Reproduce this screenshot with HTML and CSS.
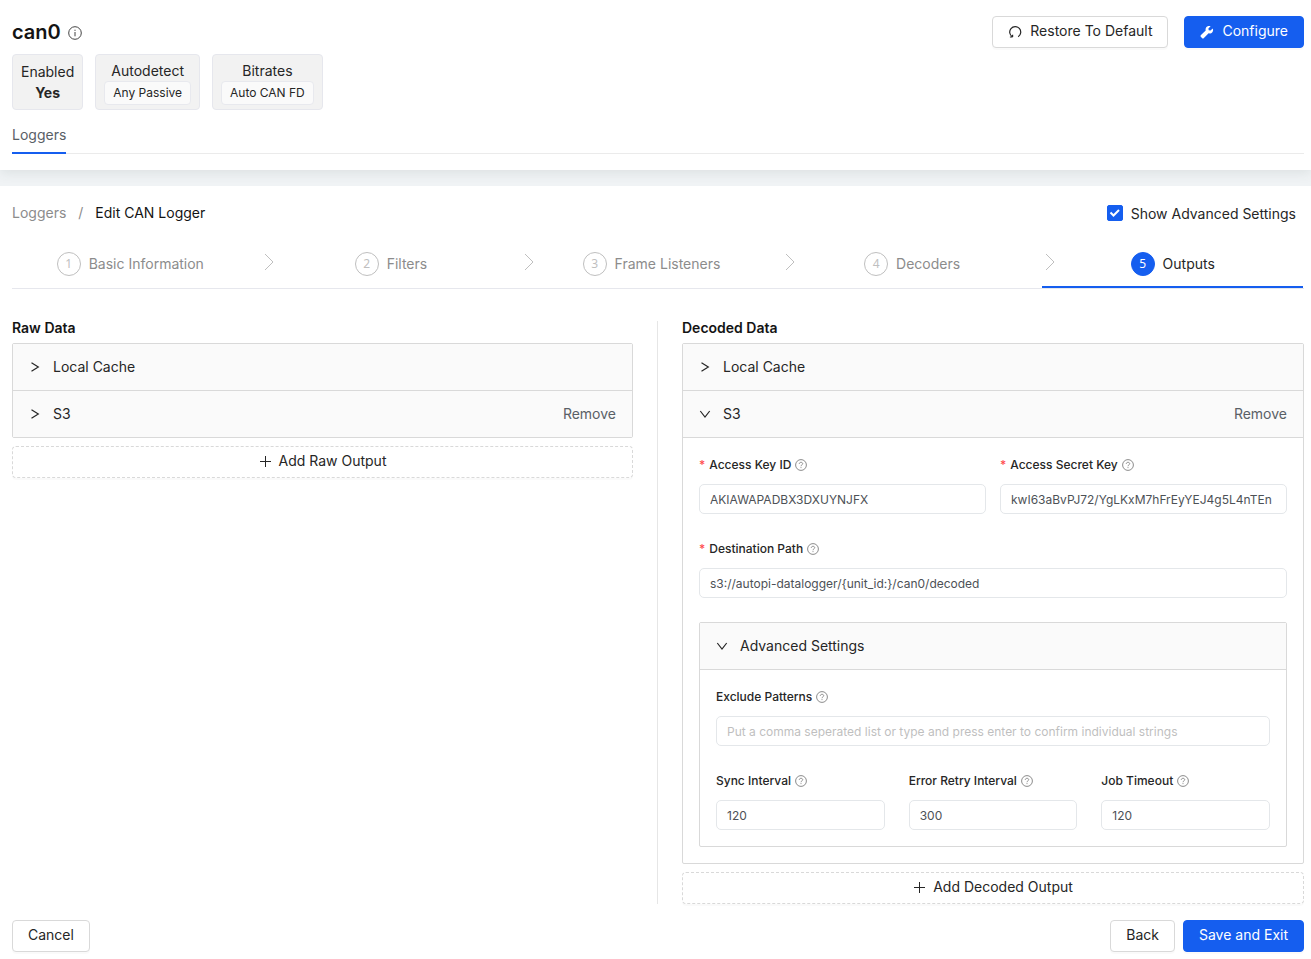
FILE: index.html
```html
<!DOCTYPE html>
<html lang="en">
<head>
<meta charset="utf-8">
<meta name="viewport" content="width=device-width, initial-scale=1">
<title>can0 – Edit CAN Logger</title>
<link rel="stylesheet" href="styles.css">
</head>
<body>
<svg class="sprite" aria-hidden="true">
  <symbol id="i-right" viewBox="0 0 12 12"><path d="M2.5 1.8 9.3 6 2.5 10.2"/></symbol>
  <symbol id="i-down" viewBox="0 0 12 12"><path d="M1.3 3 6 9l4.700-6"/></symbol>
  <symbol id="i-step" viewBox="0 0 12 18"><path d="M2 1l8 8-8 8"/></symbol>
  <symbol id="i-plus" viewBox="0 0 12 12"><path d="M6.500 1v11M1 6.500h11"/></symbol>
  <symbol id="i-help" viewBox="0 0 12 12"><circle cx="6" cy="6" r="5.400"/><path d="M4.300 4.900c0-1 .7-1.600 1.700-1.600s1.700.6 1.700 1.400c0 1.100-1.700 1.200-1.700 2.500M6 8.200v.9"/></symbol>
</svg>

<header class="header">
  <div class="header-top">
    <h1 class="title">can0
      <svg class="info" viewBox="0 0 14 14" aria-hidden="true"><circle cx="7" cy="7" r="6.300"/><path d="M7 6v4.300M7 3.700v1.200"/></svg>
    </h1>
    <div class="actions">
      <button class="btn" type="button">
        <svg class="btn-icon" viewBox="0 0 14 14" aria-hidden="true"><path d="M4.600 12H1.900M4.600 12V9.800M4.400 11.800A5.500 5.500 0 1 1 10.200 11.700" fill="none" stroke="currentColor" stroke-width="1.200"/></svg>
        Restore To Default
      </button>
      <button class="btn btn-primary" type="button">
        <svg class="btn-icon" viewBox="0 0 14 14" aria-hidden="true"><path fill="currentColor" d="M12.700 3.500 10.500 5.500 8.700 5.200 8.400 3.500 10.600 1.200C8.800.6 6.700 1.200 5.900 2.900c-.4.9-.4 1.700-.2 2.500L1 10.100a1.300 1.300 0 0 0 0 1.900l1 1a1.300 1.300 0 0 0 1.900 0L8.600 8.300c1.400.4 3-.1 3.900-1.400.7-1 .8-2.300.2-3.400z"/></svg>
        Configure
      </button>
    </div>
  </div>
  <div class="cards">
    <div class="card"><span>Enabled</span><strong>Yes</strong></div>
    <div class="card"><span>Autodetect</span><span class="tag">Any Passive</span></div>
    <div class="card"><span>Bitrates</span><span class="tag">Auto CAN FD</span></div>
  </div>
  <nav class="tabs"><a class="tab" href="#loggers">Loggers</a></nav>
</header>

<main class="main">
  <div class="toolbar">
    <nav class="breadcrumb" aria-label="Breadcrumb"><a href="#loggers">Loggers</a><span class="slash">/</span><span class="current">Edit CAN Logger</span></nav>
    <label class="check"><input type="checkbox" checked>Show Advanced Settings</label>
  </div>

  <div class="steps-wrap">
    <ol class="steps">
      <li class="step"><button type="button"><span class="num">1</span>Basic Information</button></li>
      <li class="step"><svg class="step-arrow"><use href="#i-step"/></svg><button type="button"><span class="num">2</span>Filters</button></li>
      <li class="step"><svg class="step-arrow"><use href="#i-step"/></svg><button type="button"><span class="num">3</span>Frame Listeners</button></li>
      <li class="step"><svg class="step-arrow"><use href="#i-step"/></svg><button type="button"><span class="num">4</span>Decoders</button></li>
      <li class="step active"><svg class="step-arrow"><use href="#i-step"/></svg><button type="button" aria-current="step"><span class="num">5</span>Outputs</button></li>
    </ol>
  </div>

  <div class="columns">
    <section class="column">
      <h2 class="heading">Raw Data</h2>
      <div class="panel">
        <div class="row"><button class="toggle" type="button" aria-expanded="false"><svg class="chev"><use href="#i-right"/></svg>Local Cache</button></div>
        <div class="row"><button class="toggle" type="button" aria-expanded="false"><svg class="chev"><use href="#i-right"/></svg>S3</button><button class="remove" type="button">Remove</button></div>
      </div>
      <button class="btn btn-dashed" type="button"><svg class="plus"><use href="#i-plus"/></svg>Add Raw Output</button>
    </section>

    <section class="column column-right">
      <h2 class="heading">Decoded Data</h2>
      <div class="panel">
        <div class="row"><button class="toggle" type="button" aria-expanded="false"><svg class="chev"><use href="#i-right"/></svg>Local Cache</button></div>
        <div class="row"><button class="toggle" type="button" aria-expanded="true"><svg class="chev"><use href="#i-down"/></svg>S3</button><button class="remove" type="button">Remove</button></div>
        <div class="panel-body">
          <div class="fields two">
            <div class="field">
              <label for="key"><span class="req">*</span>Access Key ID<svg class="help"><use href="#i-help"/></svg></label>
              <input id="key" type="text" value="AKIAWAPADBX3DXUYNJFX">
            </div>
            <div class="field">
              <label for="secret"><span class="req">*</span>Access Secret Key<svg class="help"><use href="#i-help"/></svg></label>
              <input id="secret" type="text" value="kwI63aBvPJ72/YgLKxM7hFrEyYEJ4g5L4nTEn">
            </div>
          </div>
          <div class="field">
            <label for="path"><span class="req">*</span>Destination Path<svg class="help"><use href="#i-help"/></svg></label>
            <input id="path" type="text" value="s3://autopi-datalogger/{unit_id:}/can0/decoded">
          </div>
          <div class="panel">
            <div class="row"><button class="toggle" type="button" aria-expanded="true"><svg class="chev"><use href="#i-down"/></svg>Advanced Settings</button></div>
            <div class="panel-body">
              <div class="field">
                <label for="exclude">Exclude Patterns<svg class="help"><use href="#i-help"/></svg></label>
                <input id="exclude" type="text" placeholder="Put a comma seperated list or type and press enter to confirm individual strings">
              </div>
              <div class="fields three">
                <div class="field">
                  <label for="sync">Sync Interval<svg class="help"><use href="#i-help"/></svg></label>
                  <input id="sync" type="text" value="120">
                </div>
                <div class="field">
                  <label for="retry">Error Retry Interval<svg class="help"><use href="#i-help"/></svg></label>
                  <input id="retry" type="text" value="300">
                </div>
                <div class="field">
                  <label for="timeout">Job Timeout<svg class="help"><use href="#i-help"/></svg></label>
                  <input id="timeout" type="text" value="120">
                </div>
              </div>
            </div>
          </div>
        </div>
      </div>
      <button class="btn btn-dashed" type="button"><svg class="plus"><use href="#i-plus"/></svg>Add Decoded Output</button>
    </section>
  </div>

  <footer class="footer">
    <button class="btn" type="button">Cancel</button>
    <div class="footer-right">
      <button class="btn" type="button">Back</button>
      <button class="btn btn-primary" type="button">Save and Exit</button>
    </div>
  </footer>
</main>
</body>
</html>
```
FILE: styles.css
```css
:root {
  --blue: #155eef;
  --text: #262626;
  --muted: #8c8c8c;
  --line: #d9d9d9;
}

* { box-sizing: border-box; }

body {
  margin: 0;
  background: #f0f3f5;
  color: var(--text);
  font: 14px/22px Inter, "Liberation Sans", sans-serif;
}

button, input { font: inherit; color: inherit; }
button { cursor: pointer; }
a { text-decoration: none; }
.sprite { position: absolute; width: 0; height: 0; }

.header {
  padding: 16px 7px 16px 12px;
  background: #fff;
  box-shadow: 0 2px 12px rgba(60, 80, 70, 0.12);
}
.header-top { display: flex; justify-content: space-between; align-items: center; }
.title {
  display: flex;
  align-items: center;
  gap: 7px;
  margin: 0;
  font-size: 20px;
  line-height: 32px;
  font-weight: 600;
  color: #141414;
}
.info { width: 14px; height: 14px; margin-top: 2px; fill: none; stroke: #434343; }
.actions { display: flex; gap: 16px; }

.btn {
  display: inline-flex;
  align-items: center;
  justify-content: center;
  gap: 8px;
  height: 32px;
  padding: 0 15px 2px;
  border: 1px solid var(--line);
  border-radius: 4px;
  background: #fff;
  box-shadow: 0 2px 0 rgba(0, 0, 0, 0.02);
}
.btn-icon { width: 14px; height: 14px; margin-top: 2px; }
.btn-primary { border-color: var(--blue); background: var(--blue); color: #fff; }
.btn-dashed { width: 100%; margin-top: 8px; border-style: dashed; }
.plus { width: 12px; height: 12px; fill: none; stroke: currentColor; }

.cards { display: flex; gap: 12px; margin-top: 6px; }
.card {
  display: flex;
  flex-direction: column;
  align-items: center;
  justify-content: center;
  height: 56px;
  padding: 2px 8px 0;
  border: 1px solid #e6e7ed;
  border-radius: 4px;
  background: #f2f2f2;
  line-height: 20px;
}
.card strong { font-weight: 700; line-height: 22px; }
.card .tag {
  padding: 0 8px;
  border: 1px solid #e8e9ee;
  border-radius: 4px;
  background: #fafafa;
  font-size: 12px;
  line-height: 22px;
}

.tabs { display: flex; margin-top: 14px; border-bottom: 1px solid #ebebeb; }
.tab {
  height: 30px;
  margin-bottom: -1px;
  border-bottom: 2px solid var(--blue);
  color: #596066;
}

.main { margin-top: 16px; padding: 16px 7px 7px 12px; background: #fff; }
.toolbar { display: flex; justify-content: space-between; padding-right: 8px; }
.breadcrumb { display: flex; gap: 12px; }
.breadcrumb a, .slash { color: var(--muted); }
.current { color: #141414; }
.check { display: flex; align-items: center; gap: 8px; padding-top: 1px; }
.check input {
  appearance: none;
  width: 16px;
  height: 16px;
  margin: 0 0 2px;
  border: 1px solid var(--line);
  border-radius: 2px;
}
.check input:checked {
  border-color: var(--blue);
  background: var(--blue) url("data:image/svg+xml,%3Csvg xmlns='http://www.w3.org/2000/svg' viewBox='0 0 14 14'%3E%3Cpath d='M2.500 6.500l3 3 5.500-5.500' fill='none' stroke='white' stroke-width='2'/%3E%3C/svg%3E");
}

.steps-wrap { border-bottom: 1px solid #e6e7ed; margin-top: 19px; }
.steps {
  display: grid;
  grid-template-columns: repeat(5, 1fr);
  margin: 0 1px 0 -12px;
  padding: 0;
  list-style: none;
}
.step { display: flex; padding: 8px 0 10px; border-bottom: 2px solid transparent; }
.step button {
  display: flex;
  flex: 1;
  align-items: center;
  justify-content: center;
  gap: 8px;
  padding: 0;
  border: 0;
  background: none;
  color: var(--muted);
}
.step-arrow {
  width: 12px;
  height: 18px;
  margin: 1px -14px 0 2px;
  fill: none;
  stroke: #bfbfbf;
}
.num {
  width: 24px;
  height: 24px;
  border: 1px solid #bfbfbf;
  border-radius: 50%;
  color: #bfbfbf;
  font: 12px/22px "Noto Sans", sans-serif;
}
.step.active { border-color: var(--blue); }
.active button { color: var(--text); }
.active .num { border-color: var(--blue); background: var(--blue); color: #fff; }

.columns {
  display: grid;
  grid-template-columns: calc(50% - 25px) 1fr;
  gap: 24px;
  margin-top: 32px;
}
.column { min-width: 0; }
.column-right { padding-left: 24px; border-left: 1px solid #e6e6e6; }
.heading { margin: 0; padding-bottom: 8px; font-size: 14px; line-height: 14px; font-weight: 600; color: #141414; }

.panel { border: 1px solid var(--line); border-radius: 2px; }
.row { display: flex; height: 46px; padding: 0 16px; background: #fafafa; }
.row + .row { height: 47px; border-top: 1px solid var(--line); }
.toggle, .remove { border: 0; padding: 0; background: none; }
.toggle { display: flex; flex: 1; align-items: center; gap: 12px; }
.remove { color: #596066; }
.chev { width: 12px; height: 12px; fill: none; stroke: #262626; stroke-width: 1.200; }
.panel-body {
  display: grid;
  gap: 24px;
  padding: 16px;
  border-top: 1px solid var(--line);
}

.fields { display: grid; gap: 24px; }
.two { grid-template-columns: 1fr 1fr; column-gap: 14px; }
.three { grid-template-columns: repeat(3, 1fr); }
.field { min-width: 0; }
.field label { display: flex; align-items: center; margin-bottom: 8px; font-size: 12px; font-weight: 500; }
.req { margin-right: 4px; color: #ff4d4f; }
.help { width: 12px; height: 12px; margin-left: 4px; fill: none; stroke: #8c8c8c; }
.field input {
  display: block;
  width: 100%;
  height: 30px;
  padding: 0 10px;
  border: 1px solid #e4e7ea;
  border-radius: 5px;
  background: #fff;
  color: #4d5156;
  font-size: 12px;
}
.field input::placeholder { color: #bfbfbf; }

.footer { display: flex; justify-content: space-between; margin-top: 16px; }
.footer-right { display: flex; gap: 8px; }
```
